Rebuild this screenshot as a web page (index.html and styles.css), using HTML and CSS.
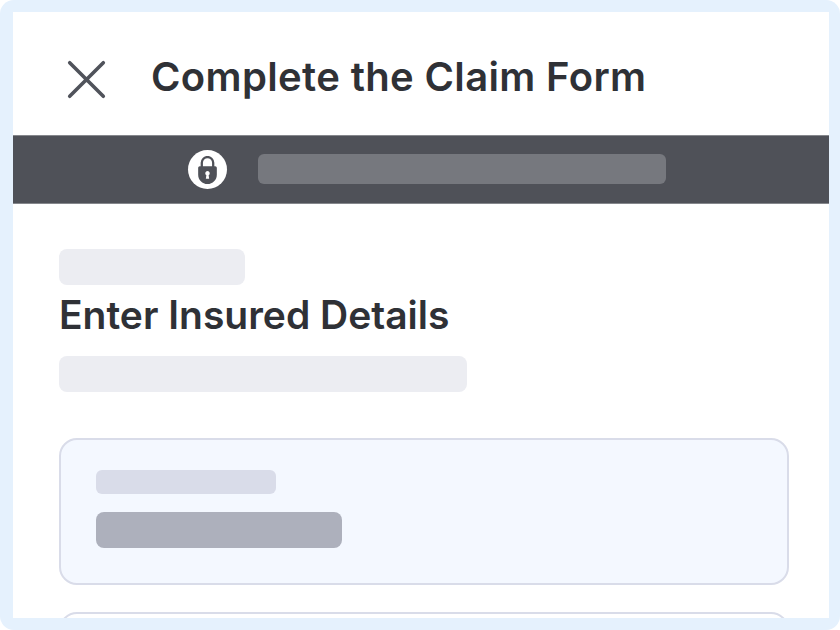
FILE: index.html
```html
<!DOCTYPE html>
<html lang="en">
<head>
<meta charset="utf-8">
<title>Complete the Claim Form</title>
<link rel="stylesheet" href="styles.css">
</head>
<body>
<div class="frame">
  <div class="screen">
    <header class="header">
      <svg class="close" width="40" height="40" viewBox="0 0 40 40" fill="none"><path d="M2.700 3.700L36.300 37.300M36.300 3.700L2.700 37.300" stroke="#50535b" stroke-width="3.600" stroke-linecap="round"/></svg>
      <h1 class="title">Complete the Claim Form</h1>
    </header>
    <div class="notice">
      <span class="lock">
        <svg width="19" height="28" viewBox="0 0 18 27"><path d="M3.500 12V6.500a5.500 5.500 0 0 1 11 0V12" fill="none" stroke="#4f5158" stroke-width="2.200"/><path fill-rule="evenodd" fill="#4f5158" d="M1.500 10h15c.8 0 1.500.7 1.500 1.500V18c0 5-4 9-9 9s-9-4-9-9v-6.500C0 10.700.7 10 1.500 10zM9 14.500a2.200 2.200 0 0 0-1.100 4.100L7.400 22h3.200l-.5-3.400A2.200 2.200 0 0 0 9 14.500z"/></svg>
      </span>
      <span class="notice-bar"></span>
    </div>
    <main class="content">
      <div class="ph ph-short"></div>
      <h2 class="subtitle">Enter Insured Details</h2>
      <div class="ph ph-long"></div>
      <section class="card">
        <div class="card-label"></div>
        <div class="card-value"></div>
      </section>
      <section class="card card-next"></section>
    </main>
  </div>
</div>
</body>
</html>
```
FILE: styles.css
```css
html, body {
  margin: 0;
  height: 100%;
  background: #fff;
}
.frame {
  box-sizing: border-box;
  width: 840px;
  height: 630px;
  padding: 12px 11px 12px 13px;
  background: #e5f1fd;
  border-radius: 14px;
}
.screen {
  height: 606px;
  background: #fff;
  overflow: hidden;
  font-family: "Inter", "Liberation Sans", sans-serif;
}
.header {
  display: flex;
  align-items: center;
  height: 123px;
  padding: 11px 0 0 54px;
  box-sizing: border-box;
  gap: 44px;
}
.close { flex: none; }
.title {
  margin: -6px 0 0;
  font-size: 40px;
  font-weight: 600;
  letter-spacing: 0.36px;
  color: #2f3136;
  white-space: nowrap;
}
.notice {
  display: flex;
  align-items: center;
  height: 69px;
  box-sizing: border-box;
  padding: 0 0 0 175px;
  gap: 31px;
  background: #4f5158;
  border-top: 1px solid #85878c;
  border-bottom: 1px solid #85878c;
}
.lock {
  display: flex;
  align-items: center;
  justify-content: center;
  width: 39px;
  height: 39px;
  border-radius: 50%;
  background: #fff;
}
.notice-bar {
  width: 408px;
  height: 30px;
  margin-bottom: 1px;
  border-radius: 6px;
  background: #76787e;
}
.content {
  padding: 45px 40px 0 46px;
}
.ph {
  height: 36px;
  border-radius: 8px;
  background: #ecedf2;
}
.ph-short { width: 186px; }
.ph-long { width: 408px; }
.subtitle {
  margin: 7px 0 18px;
  font-size: 39px;
  line-height: 46px;
  font-weight: 600;
  color: #2f3136;
}
.card {
  box-sizing: border-box;
  height: 147px;
  margin-top: 46px;
  padding: 30px 35px;
  border: 2px solid #d9dce9;
  border-radius: 18px;
  background: #f4f8ff;
}
.card-label {
  width: 180px;
  height: 24px;
  border-radius: 6px;
  background: #d9dce9;
}
.card-value {
  width: 246px;
  height: 36px;
  margin-top: 18px;
  border-radius: 8px;
  background: #adb0bc;
}
.card-next {
  margin-top: 27px;
  background: #fff;
}
```
